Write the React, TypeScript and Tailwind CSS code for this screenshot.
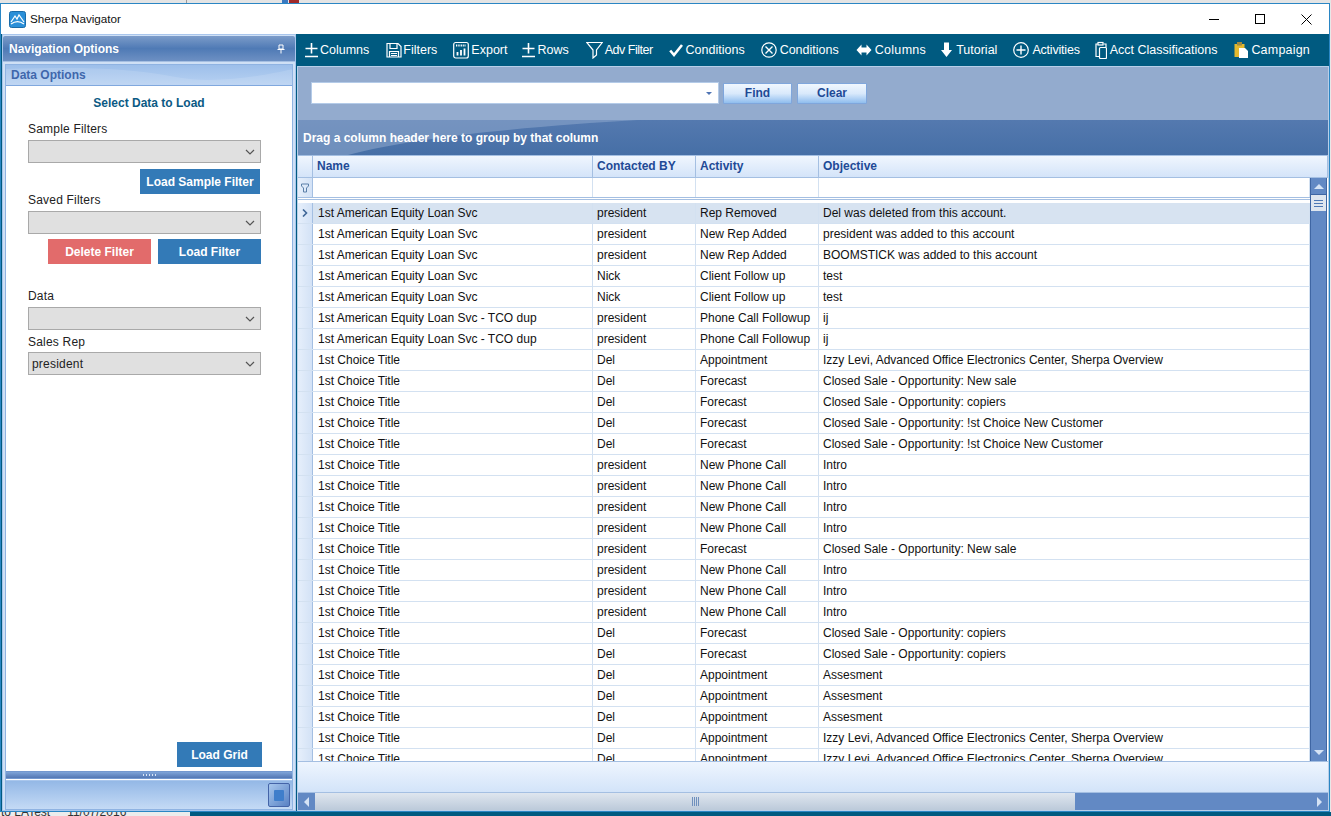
import React from "react";

const font = { fontFamily: '"Liberation Sans", Arial, sans-serif' };

const I = ({ children, w = 16 }: { children: React.ReactNode; w?: number }) => (
  <svg width={w} height="18" viewBox={`0 0 ${w} 18`} fill="none" stroke="#fff" strokeWidth="1.2" className="shrink-0">
    {children}
  </svg>
);

const PlusMinus = () => (
  <I w={13}>
    <path d="M0.5 7.5H12.5M6.5 2V12.5M0 15.5H13" strokeWidth="1.6" />
  </I>
);

const tools: { icon: React.ReactNode; label: string; cls: string; text?: string }[] = [
  { icon: <PlusMinus />, label: "Columns", cls: "ml-0 gap-[2px]" },
  {
    icon: (
      <I>
        <path d="M1 2.5H12L15 5.5V16H1Z M4 2.5V7.5H11V2.5 M3.5 16V10.5H12.5V16" />
        <path d="M5 12.5H11M5 14.5H11" strokeWidth="1" />
      </I>
    ),
    label: "Filters",
    cls: "ml-[17px] gap-[1px]",
  },
  {
    icon: (
      <I>
        <rect x="0.7" y="1.5" width="14.6" height="15.5" rx="2" />
        <path d="M3 4.5H13" strokeWidth="2" strokeDasharray="1 0.7" />
        <path d="M4.5 14.5V11M8 14.5V9M11.5 14.5V7.5" strokeWidth="1.8" />
      </I>
    ),
    label: "Export",
    cls: "ml-[16px] gap-[2px]",
  },
  { icon: <PlusMinus />, label: "Rows", cls: "ml-[14px] gap-[3px]" },
  {
    icon: (
      <I w={17}>
        <path d="M0.8 1.5H16.2L10.5 9V14L7 17V9Z" />
      </I>
    ),
    label: "Adv Filter",
    cls: "ml-[17px] gap-[2px]",
    text: "tracking-[-0.5px]",
  },
  {
    icon: (
      <I w={14}>
        <path d="M1.2 9.5L5 14L13 4" strokeWidth="2.6" />
      </I>
    ),
    label: "Conditions",
    cls: "ml-[16px] gap-[3px]",
  },
  {
    icon: (
      <I w={16}>
        <circle cx="8" cy="9" r="7.2" />
        <path d="M4.5 5.5L11.5 12.5M11.5 5.5L4.5 12.5" strokeWidth="1.4" />
      </I>
    ),
    label: "Conditions",
    cls: "ml-[16px] gap-[3px]",
  },
  {
    icon: (
      <I>
        <path d="M0.5 9L5.5 3.5V6.5H10.5V3.5L15.5 9L10.5 14.5V11.5H5.5V14.5Z" fill="#fff" stroke="none" />
      </I>
    ),
    label: "Columns",
    cls: "ml-[17px] gap-[3px]",
    text: "tracking-[0.3px]",
  },
  {
    icon: (
      <I w={11}>
        <path d="M3 1.5H8V9H11L5.5 16L0 9H3Z" fill="#fff" stroke="none" />
      </I>
    ),
    label: "Tutorial",
    cls: "ml-[15px] gap-[4px]",
  },
  {
    icon: (
      <I>
        <circle cx="8" cy="9" r="7.3" />
        <path d="M8 4.5V13.5M3.5 9H12.5" strokeWidth="1.4" />
      </I>
    ),
    label: "Activities",
    cls: "ml-[16px] gap-[3px]",
    text: "tracking-[-0.2px]",
  },
  {
    icon: (
      <I w={12}>
        <path d="M8.5 3H11V6" />
        <path d="M4 15.5H1V3H3" />
        <rect x="3" y="1.5" width="5" height="2.5" />
        <rect x="4.5" y="6.5" width="7" height="11" rx="1" />
      </I>
    ),
    label: "Acct Classifications",
    cls: "ml-[15px] gap-[3px]",
  },
  {
    icon: (
      <svg width="14" height="18" viewBox="0 0 14 18" className="shrink-0">
        <rect x="0.5" y="3" width="10" height="13" fill="#e4b92e" />
        <rect x="3" y="1" width="5" height="3.5" fill="#a08a40" />
        <path d="M5 7H11L14 10V17H5Z" fill="#fff" />
      </svg>
    ),
    label: "Campaign",
    cls: "ml-[17px] gap-[3px]",
    text: "tracking-[0.2px]",
  },
];

const rows: [string, string, string, string][] = [
  ["1st American Equity Loan Svc", "president", "Rep Removed", "Del was deleted from this account."],
  ["1st American Equity Loan Svc", "president", "New Rep Added", "president was added to this account"],
  ["1st American Equity Loan Svc", "president", "New Rep Added", "BOOMSTICK was added to this account"],
  ["1st American Equity Loan Svc", "Nick", "Client Follow up", "test"],
  ["1st American Equity Loan Svc", "Nick", "Client Follow up", "test"],
  ["1st American Equity Loan Svc - TCO dup", "president", "Phone Call Followup", "ij"],
  ["1st American Equity Loan Svc - TCO dup", "president", "Phone Call Followup", "ij"],
  ["1st Choice Title", "Del", "Appointment", "Izzy Levi, Advanced Office Electronics Center, Sherpa Overview"],
  ["1st Choice Title", "Del", "Forecast", "Closed Sale - Opportunity: New sale"],
  ["1st Choice Title", "Del", "Forecast", "Closed Sale - Opportunity: copiers"],
  ["1st Choice Title", "Del", "Forecast", "Closed Sale - Opportunity: !st Choice New Customer"],
  ["1st Choice Title", "Del", "Forecast", "Closed Sale - Opportunity: !st Choice New Customer"],
  ["1st Choice Title", "president", "New Phone Call", "Intro"],
  ["1st Choice Title", "president", "New Phone Call", "Intro"],
  ["1st Choice Title", "president", "New Phone Call", "Intro"],
  ["1st Choice Title", "president", "New Phone Call", "Intro"],
  ["1st Choice Title", "president", "Forecast", "Closed Sale - Opportunity: New sale"],
  ["1st Choice Title", "president", "New Phone Call", "Intro"],
  ["1st Choice Title", "president", "New Phone Call", "Intro"],
  ["1st Choice Title", "president", "New Phone Call", "Intro"],
  ["1st Choice Title", "Del", "Forecast", "Closed Sale - Opportunity: copiers"],
  ["1st Choice Title", "Del", "Forecast", "Closed Sale - Opportunity: copiers"],
  ["1st Choice Title", "Del", "Appointment", "Assesment"],
  ["1st Choice Title", "Del", "Appointment", "Assesment"],
  ["1st Choice Title", "Del", "Appointment", "Assesment"],
  ["1st Choice Title", "Del", "Appointment", "Izzy Levi, Advanced Office Electronics Center, Sherpa Overview"],
  ["1st Choice Title", "Del", "Appointment", "Izzy Levi, Advanced Office Electronics Center, Sherpa Overview"],
];

const Select = ({ value }: { value?: string }) => (
  <div className="w-[233px] h-[23px] bg-[#e0e0e0] border border-[#a9a9a9] flex items-center justify-between pl-[3px] pr-[5px] text-[12px] text-[#222] tracking-[0.2px]">
    <span>{value}</span>
    <svg width="10" height="6" viewBox="0 0 10 6" fill="none" stroke="#555" strokeWidth="1.2">
      <path d="M1 1L5 5L9 1" />
    </svg>
  </div>
);

const Btn = ({ w, bg = "bg-[#337ab7]", children }: { w: string; bg?: string; children: React.ReactNode }) => (
  <div className={`${w} h-[25px] ${bg} text-white font-bold text-[12px] flex items-center justify-center`}>{children}</div>
);

const Label = ({ children, cls }: { children: React.ReactNode; cls: string }) => (
  <div className={`${cls} h-[14px] leading-[14px] text-[12px] text-[#222] tracking-[0.2px]`}>{children}</div>
);

const LeftPanel = () => (
  <div className="w-[294px] ml-[1px] flex flex-col h-full border border-[#a9c6ec] bg-[#cfe0f5]">
    <div className="h-[26px] mt-[1px] shrink-0 flex items-center justify-between pl-[6px] pr-[10px] text-white font-bold text-[12px] rounded-t-[2px] bg-gradient-to-b from-[#7c9cc9] via-[#4f7ab5] to-[#6d90c3] border-b border-[#a5bfe2]">
      <span>Navigation Options</span>
      <svg width="8" height="10" viewBox="0 0 8 10" fill="none" stroke="#fff" strokeWidth="1">
        <path d="M2 1H6V5H2ZM0.5 5.5H7.5M4 5.5V9.5" />
      </svg>
    </div>
    <div className="flex-1 flex flex-col mx-[2px] mt-[2px] border border-[#8fb3e2] bg-white min-h-0">
      <div className="relative h-[21px] shrink-0 overflow-hidden flex items-center pl-[5px] text-[#3f67ac] font-bold text-[12px] bg-gradient-to-b from-[#9dbfea] to-[#b7d1f2] border-b border-[#80a8de]">
        <svg width="287" height="21" viewBox="0 0 287 21" className="absolute left-0 top-0" preserveAspectRatio="none">
          <path d="M0 4C70 2 120 2 170 12C210 20 260 10 287 4V21H0Z" fill="#fff" opacity="0.12" />
        </svg>
        <span className="relative">Data Options</span>
      </div>
      <div className="flex-1 flex flex-col min-h-0 pl-[22px]">
        <div className="w-[242px] text-center mt-[10px] h-[14px] leading-[14px] text-[12px] font-bold text-[#0b5a84]">Select Data to Load</div>
        <Label cls="mt-[12px]">Sample Filters</Label>
        <div className="mt-[4px]"><Select /></div>
        <div className="mt-[6px] ml-[112px]"><Btn w="w-[120px]">Load Sample Filter</Btn></div>
        <Label cls="mt-[-1px]">Saved Filters</Label>
        <div className="mt-[4px]"><Select /></div>
        <div className="mt-[5px] ml-[20px] flex gap-[7px]">
          <Btn w="w-[103px]" bg="bg-[#e26b6b]">Delete Filter</Btn>
          <Btn w="w-[103px]">Load Filter</Btn>
        </div>
        <Label cls="mt-[25px]">Data</Label>
        <div className="mt-[4px]"><Select /></div>
        <Label cls="mt-[5px]">Sales Rep</Label>
        <div className="mt-[3px]"><Select value="president" /></div>
        <div className="mt-auto mb-[4px] ml-[149px]"><Btn w="w-[85px]">Load Grid</Btn></div>
      </div>
      <div className="h-[8px] shrink-0 flex items-center justify-center gap-[2px] bg-gradient-to-b from-[#7fa4d8] to-[#5478b4] border-y border-[#7398cf]">
        {[0, 1, 2, 3, 4].map((i) => (
          <span key={i} className="w-[1px] h-[2px] bg-[#dbe7f7]" />
        ))}
      </div>
      <div className="h-[29px] shrink-0 mt-[1px] flex items-center justify-end pr-[2px] bg-gradient-to-b from-[#94b8e6] to-[#c4daf5] border-t border-[#a9c6ec]">
        <div className="w-[22px] h-[24px] rounded-[2px] border border-[#4464a8] bg-gradient-to-br from-[#a8c8ee] to-[#5a82c4] flex items-center justify-center">
          <span className="w-[10px] h-[11px] bg-[#3f7ecb] rounded-[1px]" />
        </div>
      </div>
    </div>
  </div>
);

const cols = ["w-[280px]", "w-[103px]", "w-[123px]", "flex-1"];

const Cell = ({ w, first, children }: { w: string; first: boolean; children?: React.ReactNode }) => (
  <div className={`${w} h-full border-r border-[#d3e1f1] ${first ? "pl-[5px]" : "pl-[4px]"} flex items-center whitespace-nowrap overflow-hidden`}>{children}</div>
);

const Grid = () => (
  <div className="flex-1 min-h-0 flex flex-col text-[12px] text-[#111]">
    <div className="flex h-[23px] shrink-0 bg-gradient-to-b from-[#f0f6fe] to-[#d4e4f9] border-y border-[#a4bfe2]">
      <div className="w-[15px] border-r border-[#a4bfe2]" />
      {["Name", "Contacted BY", "Activity", "Objective"].map((h, i) => (
        <div key={h} className={`${cols[i]} border-r border-[#a4bfe2] pl-[4px] pb-[2px] flex items-center font-bold text-[#1f4a96]`}>
          {h}
        </div>
      ))}
    </div>
    <div className="flex-1 min-h-0 flex">
      <div className="flex-1 min-w-0 flex flex-col">
        <div className="flex h-[22px] shrink-0 bg-white border-b-[3px] border-double border-[#a4bfe2]">
          <div className="w-[15px] border-r border-[#a4bfe2] bg-gradient-to-r from-[#e6effb] to-[#d3e2f6] flex items-center justify-center">
            <svg width="8" height="10" viewBox="0 0 8 10" fill="none" stroke="#5a7fa8" strokeWidth="1">
              <path d="M0.5 1H7.5V3L5.5 5V9H2.5V5L0.5 3Z" />
            </svg>
          </div>
          {cols.map((c, i) => (
            <div key={i} className={`${c} border-r border-[#d3e1f1]`} />
          ))}
        </div>
        <div className="h-[3px] shrink-0 bg-white" />
        <div className="flex-1 min-h-0 overflow-hidden">
          {rows.map((r, i) => (
            <div key={i} className={`flex h-[21px] border-b border-[#d3e1f1] ${i === 0 ? "bg-[#d7e3f1]" : "bg-white"}`}>
              <div className="w-[15px] shrink-0 h-full border-r border-[#a4bfe2] bg-gradient-to-r from-[#e6effb] to-[#d3e2f6] flex items-center justify-center">
                {i === 0 && (
                  <svg width="6" height="8" viewBox="0 0 6 8" fill="none" stroke="#3f6797" strokeWidth="1.6">
                    <path d="M1 0.5L4.5 4L1 7.5" />
                  </svg>
                )}
              </div>
              {r.map((t, j) => (
                <Cell key={j} w={cols[j]} first={j === 0}>{t}</Cell>
              ))}
            </div>
          ))}
        </div>
      </div>
      <div className="w-[17px] mr-[1px] shrink-0 flex flex-col bg-[#6289c4] border-x border-[#3f66a3]">
        <div className="h-[17px] shrink-0 flex items-center justify-center border-b border-[#3f66a3]">
          <span className="w-0 h-0 border-x-[5px] border-x-transparent border-b-[5px] border-b-[#d5e3f5]" />
        </div>
        <div className="h-[16px] shrink-0 bg-[#dfe6ef] flex flex-col items-center justify-center gap-[2px]">
          <span className="w-[9px] h-[1px] bg-[#4e78b5]" />
          <span className="w-[9px] h-[1px] bg-[#4e78b5]" />
          <span className="w-[9px] h-[1px] bg-[#4e78b5]" />
        </div>
        <div className="flex-1" />
        <div className="h-[17px] shrink-0 flex items-center justify-center">
          <span className="w-0 h-0 border-x-[5px] border-x-transparent border-t-[5px] border-t-[#d5e3f5]" />
        </div>
      </div>
    </div>
  </div>
);

const RightPanel = () => (
  <div className="flex-1 min-w-0 flex flex-col">
    <div className="h-[31px] shrink-0 pl-[8px] flex items-center text-white text-[12.5px] bg-[#005a80]">
      {tools.map((t, i) => (
        <div key={i} className={`flex items-center whitespace-nowrap ${t.cls}`}>
          {t.icon}
          <span className={`mt-[1px] ${t.text ?? ""}`}>{t.label}</span>
        </div>
      ))}
    </div>
    <div className="flex-1 min-h-0 mt-[1px] border border-[#b8cfe9] flex flex-col bg-white">
      <div className="h-[53px] shrink-0 bg-[#93abce] flex items-center pl-[13px] pb-[1px]">
        <div className="w-[408px] h-[22px] bg-white border border-[#b4cbe8] flex items-center justify-end pr-[6px]">
          <span className="w-0 h-0 border-x-[3px] border-x-transparent border-t-[3px] border-t-[#4f74b4]" />
        </div>
        <div className="ml-[4px] w-[69px] h-[21px] rounded-[1px] border border-[#7fa6dc] bg-gradient-to-b from-[#f1f7fe] via-[#d9e9fb] to-[#8fbdee] flex items-center justify-center font-bold text-[12px] text-[#1f4a96]">
          Find
        </div>
        <div className="ml-[5px] w-[70px] h-[21px] rounded-[1px] border border-[#7fa6dc] bg-gradient-to-b from-[#f1f7fe] via-[#d9e9fb] to-[#8fbdee] flex items-center justify-center font-bold text-[12px] text-[#1f4a96]">
          Clear
        </div>
      </div>
      <div className="relative h-[35px] shrink-0 overflow-hidden bg-gradient-to-b from-[#5479af] to-[#466fa6] flex items-end pb-[8px] pl-[5px] text-[12px] font-bold text-white">
        <svg width="500" height="35" viewBox="0 0 500 35" className="absolute left-0 top-0" preserveAspectRatio="none">
          <path d="M0 0H340C240 6 120 16 50 35H0Z" fill="#8fa9cd" opacity="0.55" />
        </svg>
        <span className="relative">Drag a column header here to group by that column</span>
      </div>
      <Grid />
      <div className="h-[32px] shrink-0 bg-gradient-to-b from-[#eef5fe] to-[#d3e4f9] border-y border-[#a4bfe2]" />
      <div className="h-[17px] shrink-0 bg-[#6289c4] flex items-center">
        <div className="w-[17px] flex justify-center">
          <span className="w-0 h-0 border-y-[5px] border-y-transparent border-r-[5px] border-r-[#d5e3f5]" />
        </div>
        <div className="w-[760px] h-full bg-gradient-to-b from-[#dfe6ef] to-[#bccada] flex items-center justify-center gap-[1px]">
          {[0, 1, 2, 3].map((i) => (
            <span key={i} className="w-[1px] h-[9px] bg-[#6f90bd]" />
          ))}
        </div>
        <div className="flex-1" />
        <div className="w-[17px] flex justify-center">
          <span className="w-0 h-0 border-y-[5px] border-y-transparent border-l-[5px] border-l-[#d5e3f5]" />
        </div>
      </div>
    </div>
  </div>
);

export default function App() {
  return (
    <div style={font} className="w-[1331px] h-[816px] overflow-hidden flex flex-col bg-[#e8e8e8]">
      <div className="h-[3px] shrink-0 bg-[#e4e4e4] flex justify-start">
        <div className="ml-[186px] w-[1px] bg-[#9a9a9a]" />
        <div className="ml-[95px] w-[6px] bg-[#3a78c0]" />
        <div className="ml-[1px] w-[10px] bg-[#a02a2a]" />
      </div>
      <div className="h-[809px] shrink-0 flex flex-col border border-[#2a86c4] mr-[1px] bg-[#005a80]">
        <div className="h-[30px] shrink-0 bg-white flex items-center pl-[8px] text-[#111]">
          <svg width="17" height="17" viewBox="0 0 17 17" className="shrink-0">
            <rect x="0.5" y="0.5" width="16" height="16" rx="2" fill="#2a8fd8" stroke="#1a6ba8" />
            <path d="M2 11L6 5L8 8L10 4L15 11" fill="none" stroke="#fff" strokeWidth="1.2" />
            <path d="M2 13C6 10 11 10 15 13" fill="none" stroke="#fff" strokeWidth="1.2" />
          </svg>
          <span className="ml-[4px] text-[11.7px]">Sherpa Navigator</span>
          <div className="ml-auto flex items-center h-full">
            <div className="w-[46px] flex justify-center">
              <span className="w-[10px] h-[1px] bg-black" />
            </div>
            <div className="w-[46px] flex justify-center">
              <span className="w-[10px] h-[10px] border border-black" />
            </div>
            <div className="w-[46px] flex justify-center">
              <svg width="11" height="11" viewBox="0 0 11 11" stroke="#000" strokeWidth="1">
                <path d="M0.5 0.5L10.5 10.5M10.5 0.5L0.5 10.5" />
              </svg>
            </div>
          </div>
        </div>
        <div className="flex-1 min-h-0 flex gap-[1px]">
          <LeftPanel />
          <RightPanel />
        </div>
      </div>
      <div className="flex-1 flex overflow-hidden bg-[#005a80]">
        <div className="w-[190px] bg-[#ececec] flex items-start overflow-hidden text-[12px] leading-[12px] text-[#333] whitespace-nowrap">
          <span className="-mt-[6px] ml-[1px]">to LATest</span>
          <span className="-mt-[6px] ml-[17px]">11/07/2016</span>
        </div>
      </div>
    </div>
  );
}
